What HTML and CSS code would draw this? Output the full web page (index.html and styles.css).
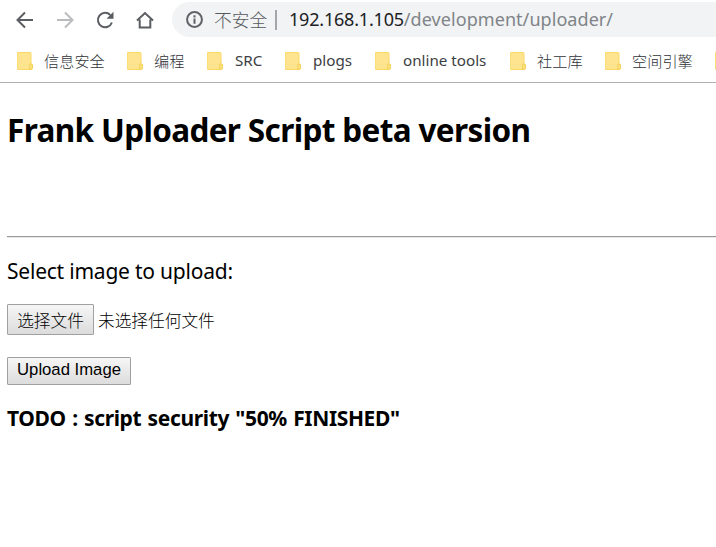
FILE: index.html
```html
<!DOCTYPE html>
<html lang="zh-CN">
<head>
<meta charset="utf-8">
<title>Frank Uploader</title>
<link rel="stylesheet" href="styles.css">
</head>
<body>
<svg class="defs" width="0" height="0" aria-hidden="true">
  <symbol id="folder" viewBox="0 0 16 18">
    <path d="M1 .5h12q1 0 1 1V12q1.600 0 1.600 1.800v2q0 1.700-1.700 1.700H1q-.8 0-.8-.8V1.300Q.2.500 1 .5z" fill="#ffe48f" stroke="#fad964"/>
    <path d="M14 12q-1.700.2-1.700 1.500 0 1 .7 1.200-.8.700-.5 2.600h1.600q1.500-.2 1.500-1.700V14q0-1.700-1.600-2z" fill="#ffe17b" stroke="#efcb52" stroke-width=".8"/>
  </symbol>
</svg>
<header class="browser">
  <nav class="toolbar">
    <svg class="nav-icon" viewBox="0 0 20 20"><path d="M18 10H3M10 2.500L2.500 10l7.500 7.500"/></svg>
    <svg class="nav-icon disabled" viewBox="0 0 20 20"><path d="M2 10h15M10 2.500l7.500 7.500-7.500 7.500"/></svg>
    <svg class="nav-icon" viewBox="0 0 20 20"><path d="M16.900 12.500A7.200 7.200 0 1 1 15.300 5"/><path class="solid" d="M18.500 1.800v7h-7z"/></svg>
    <svg class="nav-icon" viewBox="0 0 20 20"><path d="M2 10.500L10 3l8 7.500M4.700 9.500v8h10.600v-8"/></svg>
    <div class="address">
      <svg class="info" viewBox="0 0 16 16"><circle cx="8" cy="8" r="7"/><path d="M8 7v5M8 4v2"/></svg>
      <span class="insecure">不安全</span>
      <span class="divider"></span>
      <span class="url"><b>192.168.1.105</b>/development/uploader/</span>
    </div>
  </nav>
  <nav class="bookmarks">
    <a class="mark w110"><svg><use href="#folder"/></svg><span>信息安全</span></a>
    <a class="mark w80"><svg><use href="#folder"/></svg><span>编程</span></a>
    <a class="mark w78"><svg><use href="#folder"/></svg><span class="latin">SRC</span></a>
    <a class="mark w90"><svg><use href="#folder"/></svg><span class="latin">plogs</span></a>
    <a class="mark w135"><svg><use href="#folder"/></svg><span class="latin">online tools</span></a>
    <a class="mark w95"><svg><use href="#folder"/></svg><span>社工库</span></a>
    <a class="mark w110"><svg><use href="#folder"/></svg><span>空间引擎</span></a>
    <a class="mark"><svg><use href="#folder"/></svg></a>
  </nav>
</header>
<main>
  <h1>Frank Uploader Script beta version</h1>
  <hr>
  <form>
    <p class="prompt">Select image to upload:</p>
    <div class="file-row">
      <button type="button" class="choose">选择文件</button>
      <span class="file-name">未选择任何文件</span>
    </div>
    <button type="button" class="upload">Upload Image</button>
  </form>
  <h2>TODO : script security "50% FINISHED"</h2>
</main>
</body>
</html>
```
FILE: styles.css
```css
* { box-sizing: border-box; }
body {
  margin: 0;
  height: 547px;
  overflow: hidden;
  background: #fff;
  color: #000;
  font-family: "Noto Sans", "Noto Sans CJK SC", sans-serif;
}
.defs { position: absolute; }
.browser { height: 83px; overflow: hidden; border-bottom: 1px solid #b0b1b3; }
.toolbar { display: flex; align-items: center; height: 39px; padding: 0 0 0 15px; }
.nav-icon {
  flex: none;
  width: 20px;
  height: 20px;
  margin-right: 20px;
  fill: none;
  stroke: #5a5d61;
  stroke-width: 2;
}
.nav-icon .solid { fill: #5a5d61; stroke: none; }
.nav-icon.disabled { stroke: #bbbcbe; }
.nav-icon:nth-of-type(4) { margin-right: 17px; }
.address {
  display: flex;
  align-items: center;
  flex: none;
  width: 560px;
  height: 35px;
  padding-left: 14px;
  border-radius: 18px 0 0 18px;
  background: #f1f3f4;
  white-space: nowrap;
}
.info { width: 17px; height: 17px; margin-right: 11px; fill: none; stroke: #5f6368; stroke-width: 1.900; }
.insecure { width: 61px; padding-bottom: 1px; color: #55585d; font-size: 17.700px; font-weight: 300; }
.divider { width: 2px; height: 20px; margin-right: 12px; background: #a3a5a8; }
.url { padding-bottom: 1px; color: #808488; font-size: 18px; letter-spacing: 0.060px; }
.url b { color: #202124; font-weight: 400; letter-spacing: -0.200px; }
.bookmarks { display: flex; align-items: center; height: 43px; padding-left: 17px; }
.mark { display: flex; align-items: center; flex: none; color: #303337; font-size: 15.200px; font-weight: 300; white-space: nowrap; }
.mark span { padding-bottom: 2px; }
.mark .latin { padding-left: 1px; color: #3c4043; font-weight: 400; }
.mark svg { width: 16px; height: 18px; margin-right: 11px; }
.w110 { width: 110px; }
.w80 { width: 80px; }
.w78 { width: 78px; }
.w90 { width: 90px; }
.w135 { width: 135px; }
.w95 { width: 95px; }
main { padding-left: 7px; }
h1 { margin: 0; height: 153px; padding-top: 24px; font-size: 31.500px; line-height: 46px; letter-spacing: -0.640px; white-space: nowrap; }
hr { height: 2px; margin: 0; border: 0; border-top: 1px solid #999; border-bottom: 1px solid #e8e8e8; }
.prompt { margin: 18px 0 17px; font-size: 21px; line-height: 31px; letter-spacing: -0.220px; }
.file-row { display: flex; align-items: center; height: 31px; }
button { padding: 0; border: 1px solid #a0a0a0; border-radius: 1px; background: linear-gradient(#f6f6f6, #dcdcdc); color: #000; }
.choose { width: 87px; height: 31px; margin-right: 4px; font: 300 16.700px "Noto Sans CJK SC", sans-serif; }
.file-name { font-size: 16.700px; font-weight: 300; }
.upload { display: block; width: 124px; height: 28px; padding-bottom: 2px; margin-top: 22px; font: 16.700px "Liberation Sans", sans-serif; }
h2 { margin: 18px 0 0; font-size: 21px; line-height: 31px; letter-spacing: -0.360px; word-spacing: 1.200px; white-space: nowrap; }
```
